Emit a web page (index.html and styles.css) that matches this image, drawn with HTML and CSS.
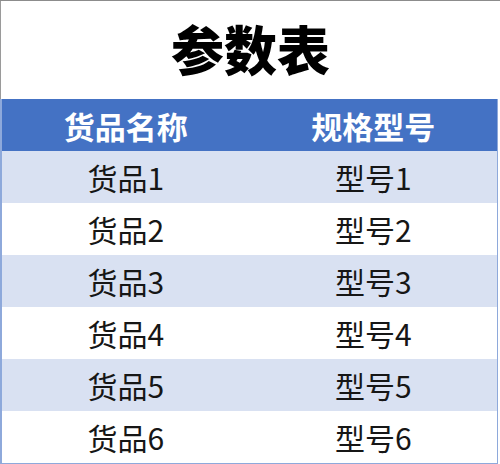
FILE: index.html
```html
<!DOCTYPE html>
<html lang="zh-CN">
<head>
<meta charset="utf-8">
<title>参数表</title>
<link rel="stylesheet" href="styles.css">
</head>
<body>
<div class="page">
  <div class="title">参数表</div>
  <div class="table">
    <div class="row head"><div class="cell">货品名称</div><div class="cell">规格型号</div></div>
    <div class="row odd"><div class="cell">货品1</div><div class="cell">型号1</div></div>
    <div class="row"><div class="cell">货品2</div><div class="cell">型号2</div></div>
    <div class="row odd"><div class="cell">货品3</div><div class="cell">型号3</div></div>
    <div class="row"><div class="cell">货品4</div><div class="cell">型号4</div></div>
    <div class="row odd"><div class="cell">货品5</div><div class="cell">型号5</div></div>
    <div class="row"><div class="cell">货品6</div><div class="cell">型号6</div></div>
  </div>
</div>
</body>
</html>
```
FILE: styles.css
```css
html, body {
  margin: 0;
  padding: 0;
  background: #ffffff;
}
.page {
  width: 500px;
  height: 464px;
  box-sizing: border-box;
  border-top: 1px solid #8c8c8c;
  font-family: "Noto Sans CJK SC", "Noto Sans", sans-serif;
  overflow: hidden;
}
.title {
  height: 98px;
  box-sizing: border-box;
  border-left: 1px solid #9a9a9a;
  display: flex;
  align-items: center;
  justify-content: center;
  font-size: 53px;
  font-weight: 900;
  color: #000;
  padding-bottom: 4px;
}
.table {
  width: 498px;
  box-sizing: border-box;
  border-left: 2px solid #8ea9db;
  border-right: 1px solid #8ea9db;
  border-bottom: 1px solid #8ea9db;
}
.row {
  display: grid;
  grid-template-columns: 1fr 1fr;
  height: 52px;
  background: #ffffff;
}
.row.odd {
  background: #d9e1f2;
}
.row.head {
  background: #4472c4;
  color: #ffffff;
  font-weight: 700;
}
.cell {
  display: flex;
  align-items: center;
  justify-content: center;
  font-size: 30px;
  color: #161616;
  line-height: 1;
}
.head .cell {
  color: #ffffff;
  font-size: 31px;
}
```
